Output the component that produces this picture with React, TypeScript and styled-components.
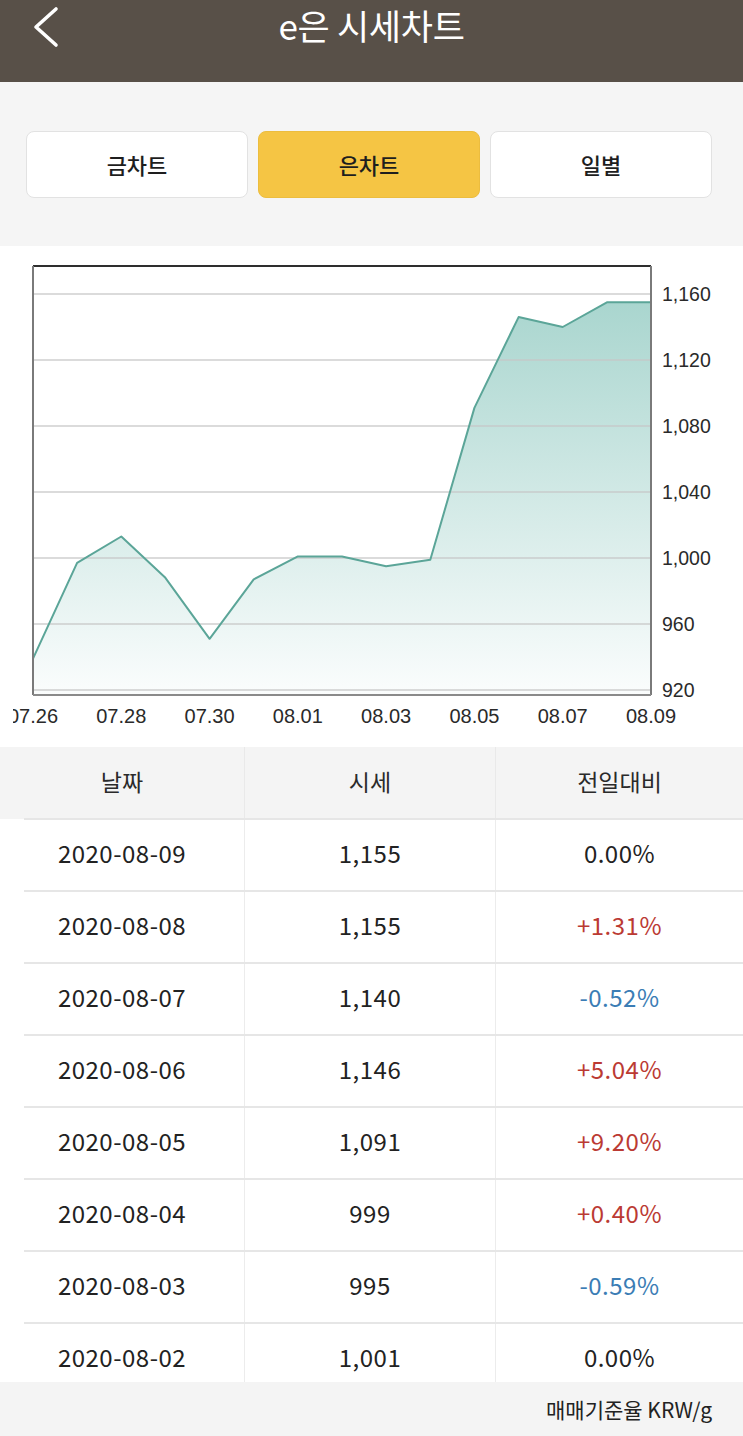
import React from "react";
import styled, { createGlobalStyle } from "styled-components";

const GlobalStyle = createGlobalStyle`
  html, body { margin: 0; padding: 0; background: #ffffff; }
  body { font-family: "Noto Sans CJK KR", "Noto Sans", sans-serif; color: #222; }
  * { box-sizing: border-box; }
`;

const Page = styled.div`
  width: 743px;
  height: 1436px;
  overflow: hidden;
  position: relative;
  background: #ffffff;
`;

const Header = styled.header`
  height: 82px;
  background: #585048;
  display: grid;
  grid-template-columns: 90px 1fr 90px;
  align-items: start;
`;

const BackButton = styled.button`
  border: none;
  background: transparent;
  padding: 0;
  margin: 5px 0 0 30px;
  width: 34px;
  height: 44px;
  display: flex;
  align-items: center;
  justify-content: center;
  cursor: pointer;
`;

const Title = styled.h1`
  margin: 0;
  padding-top: 0;
  text-align: center;
  color: #ffffff;
  font-size: 35px;
  font-weight: 400;
  line-height: 50px;
  letter-spacing: -0.3px;
`;

const TabsArea = styled.div`
  background: #f5f5f5;
  padding: 49px 31px 48px 26px;
  display: grid;
  grid-template-columns: repeat(3, 1fr);
  gap: 10px;
`;

const Tab = styled.button<{ $active?: boolean }>`
  height: 67px;
  border-radius: 8px;
  border: 1.5px solid ${(p) => (p.$active ? "#ecbd3f" : "#e2e2e2")};
  background: ${(p) => (p.$active ? "#f5c544" : "#ffffff")};
  color: #1e1e1e;
  font-family: "Noto Sans CJK KR", sans-serif;
  font-size: 22px;
  font-weight: 500;
  padding: 0 0 2px;
  cursor: pointer;
`;

const ChartSection = styled.section`
  height: 501px;
  background: #ffffff;
`;

const Table = styled.div`
  display: flex;
  flex-direction: column;
`;

const HeadRow = styled.div`
  display: grid;
  grid-template-columns: 244px 251px 1fr;
  height: 72px;
  background: #f4f4f4;
`;

const HeadCell = styled.div<{ $divider?: boolean }>`
  display: flex;
  align-items: center;
  justify-content: center;
  font-size: 23px;
  color: #2a2a2a;
  border-left: ${(p) => (p.$divider ? "1.5px solid #e9e9e9" : "none")};
  padding-bottom: 4px;
`;

const Row = styled.div`
  display: grid;
  grid-template-columns: 244px 251px 1fr;
  height: 72px;
  position: relative;
  &:not(:first-child)::before {
    content: "";
    position: absolute;
    left: 24px;
    right: 0;
    top: -1px;
    height: 1.5px;
    background: #e6e6e6;
  }
`;

const Cell = styled.div<{ $divider?: boolean; $tone?: "up" | "down" | "flat" }>`
  display: flex;
  align-items: center;
  justify-content: center;
  font-size: 24px;
  letter-spacing: 0.5px;
  color: ${(p) =>
    p.$tone === "up" ? "#bb3a33" : p.$tone === "down" ? "#3b7db5" : "#222222"};
  border-left: ${(p) => (p.$divider ? "1.5px solid #ececec" : "none")};
  padding-bottom: 5px;
`;

const Footer = styled.footer`
  position: absolute;
  left: 0;
  right: 0;
  bottom: 0;
  height: 54px;
  background: #f4f4f4;
  display: flex;
  align-items: center;
  justify-content: flex-end;
  padding: 0 31px 0 0;
  font-size: 21px;
  color: #222;
`;

const values = [939, 997, 1013, 988, 951, 987, 1001, 1001, 995, 999, 1091, 1146, 1140, 1155, 1155];
const xLabels = ["07.26", "07.28", "07.30", "08.01", "08.03", "08.05", "08.07", "08.09"];
const yLabels = [1160, 1120, 1080, 1040, 1000, 960, 920];

const LEFT = 33;
const RIGHT = 651;
const TOP = 20;
const BOTTOM = 449;
const Y1160 = 48;
const STEP = 66;

const xOf = (i: number) => LEFT + (i * (RIGHT - LEFT)) / 14;
const yOf = (v: number) => Y1160 + ((1160 - v) / 40) * STEP;

function Chart() {
  const pts = values.map((v, i) => `${xOf(i).toFixed(1)},${yOf(v).toFixed(1)}`);
  const line = `M${pts.join(" L")}`;
  const area = `${line} L${RIGHT},${BOTTOM} L${LEFT},${BOTTOM} Z`;
  return (
    <svg width="743" height="501" viewBox="0 0 743 501">
      <defs>
        <linearGradient id="areaGrad" x1="0" y1="50" x2="0" y2="449" gradientUnits="userSpaceOnUse">
          <stop offset="0" stopColor="#a8d5ce" />
          <stop offset="1" stopColor="#fbfdfd" />
        </linearGradient>
        <clipPath id="clip">
          <rect x="13" y="0" width="730" height="501" />
        </clipPath>
      </defs>
      <g clipPath="url(#clip)">
        <rect x={LEFT} y={TOP} width={RIGHT - LEFT} height={BOTTOM - TOP} fill="#ffffff" />
        <path d={area} fill="url(#areaGrad)" />
        {yLabels.map((v, i) => (
          <line
            key={v}
            x1={LEFT}
            x2={RIGHT}
            y1={Y1160 + i * STEP}
            y2={Y1160 + i * STEP}
            stroke="#c6c6c6"
            strokeOpacity="0.85"
            strokeWidth="1.5"
          />
        ))}
        <path d={line} fill="none" stroke="#5ba598" strokeWidth="2" strokeLinejoin="round" />
        <line x1={LEFT} x2={RIGHT} y1={TOP} y2={TOP} stroke="#2e2e2e" strokeWidth="2" />
        <line x1={LEFT} x2={LEFT} y1={TOP} y2={BOTTOM} stroke="#7a7a7a" strokeWidth="2" />
        <line x1={RIGHT} x2={RIGHT} y1={TOP} y2={BOTTOM} stroke="#7a7a7a" strokeWidth="2" />
        <line x1={LEFT} x2={RIGHT} y1={BOTTOM} y2={BOTTOM} stroke="#8a8a8a" strokeWidth="2" />
        {yLabels.map((v, i) => (
          <text
            key={v}
            x={662}
            y={Y1160 + i * STEP + 7}
            fontFamily="'Liberation Sans', Arial, sans-serif"
            fontSize="19.5"
            fill="#2a2a2a"
          >
            {v.toLocaleString("en-US")}
          </text>
        ))}
        {xLabels.map((t, i) => (
          <text
            key={t}
            x={xOf(i * 2)}
            y={477}
            textAnchor="middle"
            fontFamily="'Liberation Sans', Arial, sans-serif"
            fontSize="20"
            fill="#2a2a2a"
          >
            {t}
          </text>
        ))}
      </g>
    </svg>
  );
}

type RowData = { date: string; price: string; change: string; tone: "up" | "down" | "flat" };

const rows: RowData[] = [
  { date: "2020-08-09", price: "1,155", change: "0.00%", tone: "flat" },
  { date: "2020-08-08", price: "1,155", change: "+1.31%", tone: "up" },
  { date: "2020-08-07", price: "1,140", change: "-0.52%", tone: "down" },
  { date: "2020-08-06", price: "1,146", change: "+5.04%", tone: "up" },
  { date: "2020-08-05", price: "1,091", change: "+9.20%", tone: "up" },
  { date: "2020-08-04", price: "999", change: "+0.40%", tone: "up" },
  { date: "2020-08-03", price: "995", change: "-0.59%", tone: "down" },
  { date: "2020-08-02", price: "1,001", change: "0.00%", tone: "flat" },
];

export default function App() {
  return (
    <Page>
      <GlobalStyle />
      <Header>
        <BackButton aria-label="뒤로">
          <svg width="30" height="44" viewBox="0 0 30 44">
            <path d="M24 4 L4 22 L24 40" fill="none" stroke="#ffffff" strokeWidth="3.6" strokeLinecap="round" strokeLinejoin="round" />
          </svg>
        </BackButton>
        <Title>e은 시세차트</Title>
        <div />
      </Header>
      <TabsArea>
        <Tab>금차트</Tab>
        <Tab $active>은차트</Tab>
        <Tab>일별</Tab>
      </TabsArea>
      <ChartSection>
        <Chart />
      </ChartSection>
      <Table>
        <HeadRow>
          <HeadCell>날짜</HeadCell>
          <HeadCell $divider>시세</HeadCell>
          <HeadCell $divider>전일대비</HeadCell>
        </HeadRow>
        {rows.map((r) => (
          <Row key={r.date}>
            <Cell>{r.date}</Cell>
            <Cell $divider>{r.price}</Cell>
            <Cell $divider $tone={r.tone}>{r.change}</Cell>
          </Row>
        ))}
      </Table>
      <Footer>매매기준율 KRW/g</Footer>
    </Page>
  );
}
